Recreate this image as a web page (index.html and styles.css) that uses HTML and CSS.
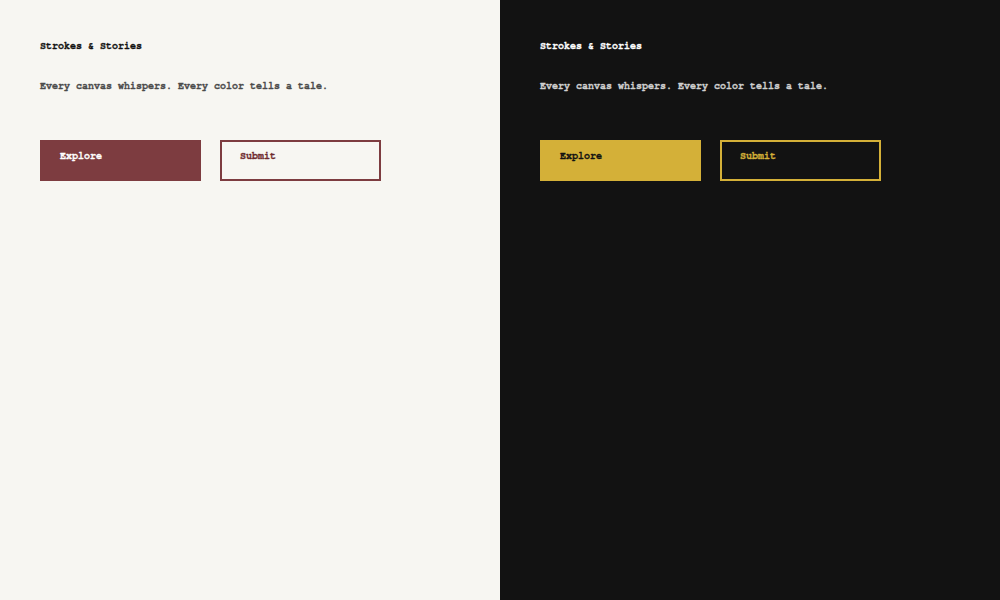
FILE: index.html
```html
<!DOCTYPE html>
<html>
<head>
<meta charset="utf-8">
<link rel="stylesheet" href="styles.css">
</head>
<body>
<div class="split">
  <section class="panel light">
    <h1 class="title">Strokes &amp; Stories</h1>
    <p class="tagline">Every canvas whispers. Every color tells a tale.</p>
    <div class="actions">
      <button class="btn primary">Explore</button>
      <button class="btn outline">Submit</button>
    </div>
  </section>
  <section class="panel dark">
    <h1 class="title">Strokes &amp; Stories</h1>
    <p class="tagline">Every canvas whispers. Every color tells a tale.</p>
    <div class="actions">
      <button class="btn primary">Explore</button>
      <button class="btn outline">Submit</button>
    </div>
  </section>
</div>
</body>
</html>
```
FILE: styles.css
```css
* { box-sizing: border-box; }
html, body { margin: 0; padding: 0; }
body {
  font-family: FreeMono, "Liberation Mono", monospace;
  font-weight: bold;
  font-size: 10px;
  -webkit-text-stroke-width: 0.3px;
}
.split {
  display: grid;
  grid-template-columns: 500px 500px;
  height: 600px;
}
.panel {
  padding: 40px;
  display: flex;
  flex-direction: column;
}
.light { background: #f7f6f2; --fg: #111111; --muted: #4a4a4a; --accent: #7d3c40; --on-accent: #ffffff; --outline-text: #6e2a2e; }
.dark { background: #121212; --fg: #ffffff; --muted: #d0d0d0; --accent: #d4b038; --on-accent: #121212; --outline-text: #d4b038; }
.title {
  margin: 0;
  font-size: 10px;
  line-height: 12px;
  color: var(--fg);
}
.tagline {
  margin: 28px 0 0;
  line-height: 12px;
  color: var(--muted);
}
.actions {
  margin-top: 48px;
  display: flex;
  gap: 19px;
}
.btn {
  font: inherit;
  width: 161px;
  height: 41px;
  padding: 8px 18px 10px;
  text-align: left;
  line-height: 12px;
  border: 2px solid var(--accent);
  border-radius: 0;
  display: flex;
  align-items: flex-start;
}
.primary { background: var(--accent); color: var(--on-accent); }
.outline { background: transparent; color: var(--outline-text); }
```
